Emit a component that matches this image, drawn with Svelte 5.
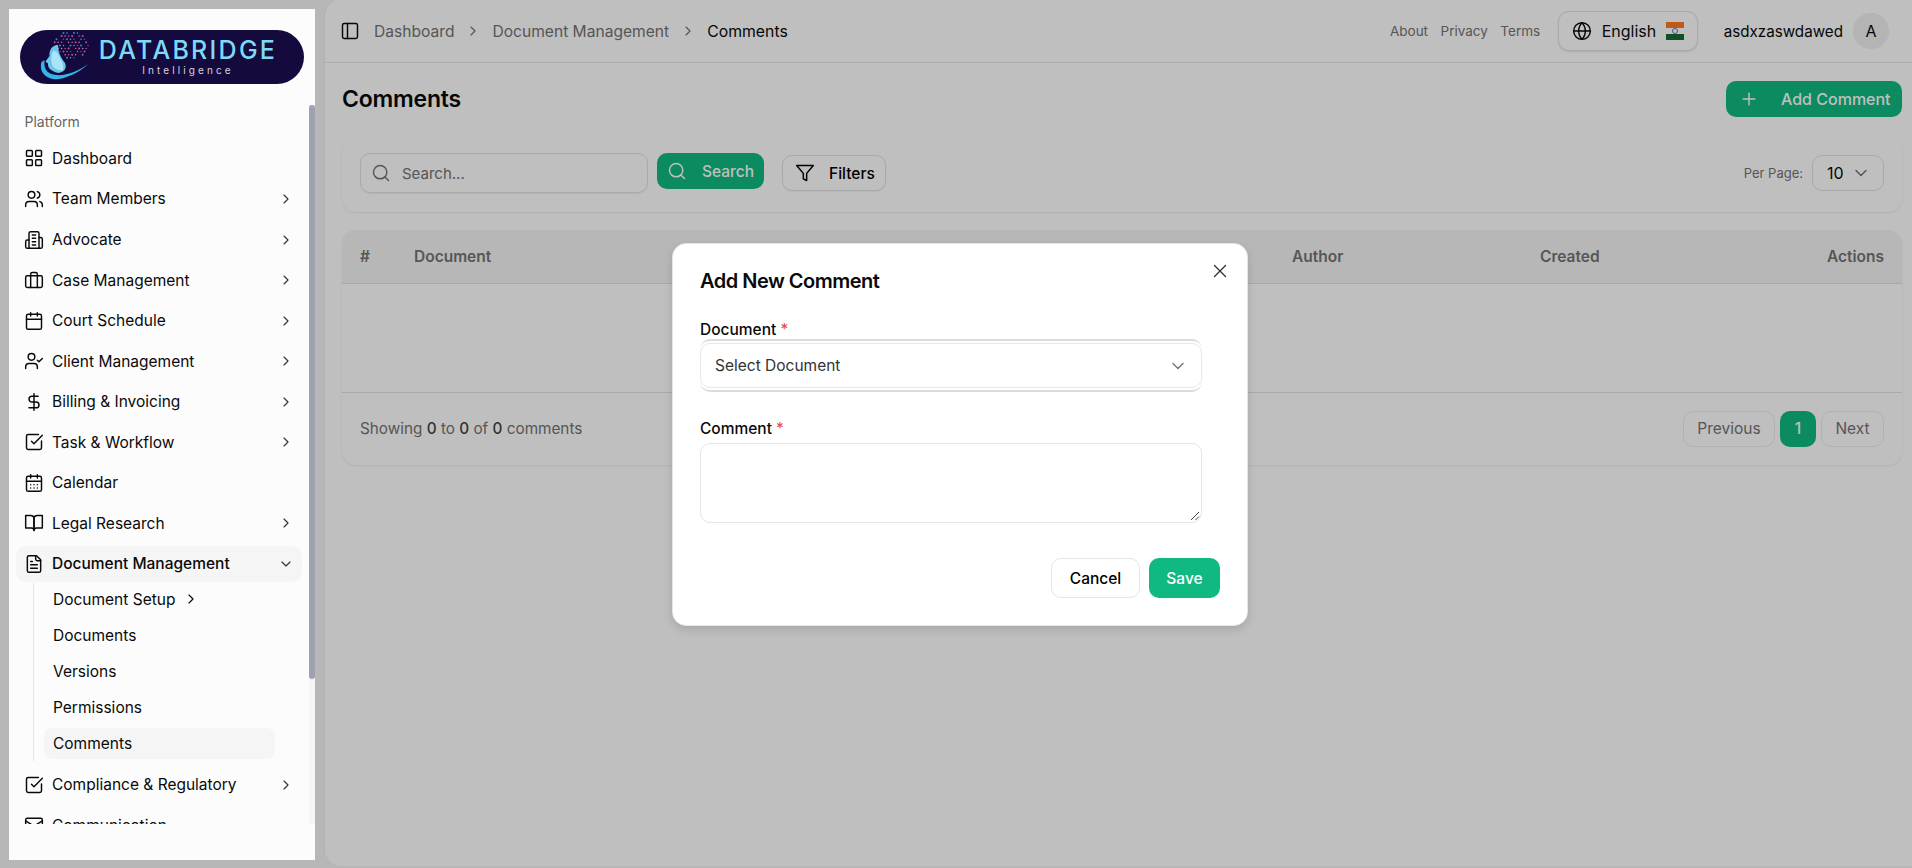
<script>
  const icons = {
    grid: '<rect x="3" y="3" width="7" height="7" rx="1"/><rect x="14" y="3" width="7" height="7" rx="1"/><rect x="14" y="14" width="7" height="7" rx="1"/><rect x="3" y="14" width="7" height="7" rx="1"/>',
    users: '<path d="M16 21v-2a4 4 0 0 0-4-4H6a4 4 0 0 0-4 4v2"/><circle cx="9" cy="7" r="4"/><path d="M22 21v-2a4 4 0 0 0-3-3.87"/><path d="M16 3.13a4 4 0 0 1 0 7.75"/>',
    building: '<path d="M6 22V4a2 2 0 0 1 2-2h8a2 2 0 0 1 2 2v18Z"/><path d="M6 12H4a2 2 0 0 0-2 2v6a2 2 0 0 0 2 2h2"/><path d="M18 9h2a2 2 0 0 1 2 2v9a2 2 0 0 1-2 2h-2"/><path d="M10 6h4"/><path d="M10 10h4"/><path d="M10 14h4"/><path d="M10 18h4"/>',
    briefcase: '<rect x="2" y="7" width="20" height="14" rx="2"/><path d="M16 21V5a2 2 0 0 0-2-2h-4a2 2 0 0 0-2 2v16"/>',
    calendar: '<path d="M8 2v4"/><path d="M16 2v4"/><rect x="3" y="4" width="18" height="18" rx="2"/><path d="M3 10h18"/>',
    usercheck: '<path d="M16 21v-2a4 4 0 0 0-4-4H6a4 4 0 0 0-4 4v2"/><circle cx="9" cy="7" r="4"/><path d="m16 11 2 2 4-4"/>',
    dollar: '<path d="M12 2v20"/><path d="M17 5H9.5a3.5 3.5 0 0 0 0 7h5a3.5 3.5 0 0 1 0 7H6"/>',
    check: '<path d="M21 10.656V19a2 2 0 0 1-2 2H5a2 2 0 0 1-2-2V5a2 2 0 0 1 2-2h12.344"/><path d="m9 11 3 3L22 4"/>',
    days: '<path d="M8 2v4"/><path d="M16 2v4"/><rect x="3" y="4" width="18" height="18" rx="2"/><path d="M3 10h18"/><path d="M8 14h.01"/><path d="M12 14h.01"/><path d="M16 14h.01"/><path d="M8 18h.01"/><path d="M12 18h.01"/><path d="M16 18h.01"/>',
    book: '<path d="M2 3h6a4 4 0 0 1 4 4v14a3 3 0 0 0-3-3H2z"/><path d="M22 3h-6a4 4 0 0 0-4 4v14a3 3 0 0 1 3-3h7z"/>',
    file: '<path d="M15 2H6a2 2 0 0 0-2 2v16a2 2 0 0 0 2 2h12a2 2 0 0 0 2-2V7Z"/><path d="M14 2v4a2 2 0 0 0 2 2h4"/><path d="M10 9H8"/><path d="M16 13H8"/><path d="M16 17H8"/>',
    mail: '<rect x="2" y="4" width="20" height="16" rx="2"/><path d="m22 7-8.97 5.7a1.94 1.94 0 0 1-2.06 0L2 7"/>',
    panel: '<rect x="3" y="3" width="18" height="18" rx="2"/><path d="M9 3v18"/>',
    globe: '<circle cx="12" cy="12" r="10"/><path d="M12 2a14.5 14.5 0 0 0 0 20 14.5 14.5 0 0 0 0-20"/><path d="M2 12h20"/>',
    search: '<circle cx="11" cy="11" r="8"/><path d="m21 21-4.3-4.3"/>',
    funnel: '<polygon points="22 3 2 3 10 12.46 10 19 14 21 14 12.46 22 3"/>',
    plus: '<path d="M5 12h14"/><path d="M12 5v14"/>',
    x: '<path d="M18 6 6 18"/><path d="m6 6 12 12"/>',
    down: '<path d="m6 9 6 6 6-6"/>',
    right: '<path d="m9 18 6-6-6-6"/>'
  };

  const before = [
    { icon: 'grid', label: 'Dashboard' },
    { icon: 'users', label: 'Team Members', more: true },
    { icon: 'building', label: 'Advocate', more: true },
    { icon: 'briefcase', label: 'Case Management', more: true },
    { icon: 'calendar', label: 'Court Schedule', more: true },
    { icon: 'usercheck', label: 'Client Management', more: true },
    { icon: 'dollar', label: 'Billing & Invoicing', more: true },
    { icon: 'check', label: 'Task & Workflow', more: true },
    { icon: 'days', label: 'Calendar' },
    { icon: 'book', label: 'Legal Research', more: true }
  ];
  const sub = ['Documents', 'Versions', 'Permissions'];

  // dot cloud of the logo
  const palette = ['#3f7fd6', '#e0598b', '#5a9be8', '#c94f8a', '#3568b8', '#f07aa0'];
  const dots = [];
  for (let r = 0; r < 9; r++) {
    for (let c = 0; c < 11; c++) {
      const x = 33 + c * 3.5 + (r % 2) * 1.6;
      const y = 3 + r * 3.100;
      const d = Math.hypot((x - 51) / 18, (y - 15) / 13.500);
      if (d < 1 && (r * 7 + c * 3) % 5 !== 0) {
        dots.push({ x, y, s: palette[(r * 5 + c * 2) % 6], r: (r + c) % 3 === 0 ? 1 : 0.75 });
      }
    }
  }
</script>

{#snippet ic(name, cls = '')}
  <svg class="ic {cls}" viewBox="0 0 24 24" fill="none" stroke="currentColor" stroke-width="2" stroke-linecap="round" stroke-linejoin="round">{@html icons[name]}</svg>
{/snippet}

{#snippet navItem(item)}
  <div class="item">
    {@render ic(item.icon, 'i20')}
    <span class="lbl">{item.label}</span>
    {#if item.more}{@render ic('right', 'i16 chev')}{/if}
  </div>
{/snippet}

<div class="app">
  <aside class="sidebar">
    <div class="logo">
      <svg class="logo-art" viewBox="0 0 70 54">
        {#each dots as d}<circle cx={d.x} cy={d.y} r={d.r} fill={d.s} />{/each}
        <path d="M38 15C32 15 29 20 29.500 26L25.500 31.500 28 33.500C27.500 38 31 41 38 43 45 42 47 38 45 33 41 28 38 22 38 15Z" fill="#6cc6ec" />
        <path d="M33 21C31 25 30.500 30 32.500 36 36 40 40 41 43 40 44 36 42 31 39 26 38 23 35.500 20 33 21Z" fill="#a9e4fa" />
        <path d="M21.500 32C18 44 30 52 42 48.500 53 45.500 62 40 68 34 59 41 46 46 36 45 28 44 23.500 40 24.500 30Z" fill="#35b4e8" />
      </svg>
      <div class="logo-text">
        <span class="brand">DATABRIDGE</span>
        <span class="tag">Intelligence</span>
      </div>
    </div>

    <div class="nav-wrap">
      <nav class="nav">
        <div class="group-label">Platform</div>
        <div class="items">
          {#each before as item}{@render navItem(item)}{/each}
          <div class="item active">
            {@render ic('file', 'i20')}
            <span class="lbl">Document Management</span>
            {@render ic('down', 'i16 chev')}
          </div>
          <div class="sublist">
            <div class="subitem">Document Setup {@render ic('right', 'i16 subchev')}</div>
            {#each sub as s}<div class="subitem">{s}</div>{/each}
            <div class="subitem current">Comments</div>
          </div>
          <div class="item">
            {@render ic('check', 'i20')}
            <span class="lbl">Compliance &amp; Regulatory</span>
            {@render ic('right', 'i16 chev')}
          </div>
          <div class="item">
            {@render ic('mail', 'i20')}
            <span class="lbl">Communication</span>
          </div>
        </div>
      </nav>
      <div class="scroll-track"><div class="scroll-thumb"></div></div>
    </div>
  </aside>

  <main class="main">
    <header class="topbar">
      {@render ic('panel', 'i20 toggle')}
      <span class="crumb">Dashboard</span>
      {@render ic('right', 'i16 sep')}
      <span class="crumb">Document Management</span>
      {@render ic('right', 'i16 sep')}
      <span class="crumb now">Comments</span>
      <div class="top-right">
        <span class="toplink">About</span>
        <span class="toplink">Privacy</span>
        <span class="toplink">Terms</span>
        <div class="lang">
          {@render ic('globe', 'i20')}
          <span>English</span>
          <span class="flag"><i class="wheel"></i></span>
        </div>
        <span class="uname">asdxzaswdawed</span>
        <span class="avatar">A</span>
      </div>
    </header>

    <div class="content">
      <div class="title-row">
        <h1>Comments</h1>
        <button class="btn-add">{@render ic('plus', 'i20')}<span>Add Comment</span></button>
      </div>

      <section class="card filters">
        <div class="search-input">{@render ic('search', 'i20')}<span>Search...</span></div>
        <button class="btn-search">{@render ic('search', 'i20')}<span>Search</span></button>
        <button class="btn-filter">{@render ic('funnel', 'i20')}<span>Filters</span></button>
        <div class="perpage">
          <span>Per Page:</span>
          <div class="pp-select"><b>10</b>{@render ic('down', 'i20')}</div>
        </div>
      </section>

      <section class="card table">
        <div class="thead">
          <span class="c-num">#</span>
          <span class="c-doc">Document</span>
          <span class="c-author">Author</span>
          <span class="c-created">Created</span>
          <span class="c-actions">Actions</span>
        </div>
        <div class="tbody"></div>
        <div class="tfoot">
          <span class="showing">Showing <b>0</b> to <b>0</b> of <b>0</b> comments</span>
          <div class="pager">
            <span class="pg prev">Previous</span>
            <span class="pg on">1</span>
            <span class="pg next">Next</span>
          </div>
        </div>
      </section>
    </div>
  </main>

  <div class="overlay">
    <div class="modal">
      <button class="close" aria-label="Close">{@render ic('x', 'i22')}</button>
      <h2>Add New Comment</h2>
      <div class="field first">
        <div class="label">Document <em>*</em></div>
        <div class="select-outer">
          <div class="select-inner"><span>Select Document</span>{@render ic('down', 'i20')}</div>
        </div>
      </div>
      <div class="field second">
        <div class="label">Comment <em>*</em></div>
        <div class="textarea">
          <svg class="grip" viewBox="0 0 10 10"><path d="M9 1 1 9M9 5.500 5.500 9" stroke="#444" stroke-width="1" fill="none" /></svg>
        </div>
      </div>
      <div class="actions">
        <button class="cancel">Cancel</button>
        <button class="save">Save</button>
      </div>
    </div>
  </div>
</div>

<style>
  :global(body) {
    margin: 0;
    font-family: Inter, "Noto Sans", sans-serif;
    color: #0a0a0a;
  }
  :global(*) { box-sizing: border-box; }

  .ic { flex: none; display: block; }
  .ic.i22 { width: 22px; height: 22px; stroke-width: 1.5; }
  .ic.i20 { width: 20px; height: 20px; stroke-width: 1.75; }
  .ic.i16 { width: 16px; height: 16px; stroke-width: 1.75; }

  .app {
    position: relative;
    display: flex;
    width: 1912px;
    height: 868px;
    overflow: hidden;
    background: #f5f5f5;
    font-size: 15.500px;
  }

  /* sidebar */
  .sidebar {
    position: relative;
    z-index: 60;
    flex: none;
    display: flex;
    flex-direction: column;
    width: 306px;
    height: 851px;
    margin: 9px 0 8px 9px;
    background: #fcfcfc;
    padding-bottom: 36px;
  }
  .logo {
    position: relative;
    flex: none;
    display: flex;
    align-items: center;
    width: 284px;
    height: 54px;
    margin: 21px 0 21px 11px;
    border-radius: 27px;
    background: #150a3e;
  }
  .logo-art { position: absolute; left: 0; top: 0; width: 70px; height: 54px; }
  .logo-text {
    display: flex;
    flex-direction: column;
    align-items: center;
    margin-left: 80px;
    width: 176px;
  }
  .brand {
    font-size: 25px;
    line-height: 24px;
    font-weight: 500;
    letter-spacing: 2.250px;
    color: #7ddaf7;
    white-space: nowrap;
  }
  .tag {
    font-size: 10px;
    line-height: 11px;
    letter-spacing: 3.100px;
    color: #d5d3de;
    margin-top: 3px;
  }
  .nav-wrap { position: relative; flex: 1; min-height: 0; overflow: hidden; }
  .nav { width: 300px; padding: 8px 0 0 7px; }
  .group-label {
    padding-left: 8.500px;
    font-size: 14px;
    line-height: 18px;
    color: #666;
  }
  .items { display: flex; flex-direction: column; gap: 4px; margin-top: 9.200px; }
  .item {
    display: flex;
    align-items: center;
    gap: 8px;
    width: 286px;
    height: 36.540px;
    padding: 0 8px;
    border-radius: 10px;
    white-space: nowrap;
  }
  .item.active { background: #f5f5f5; font-weight: 500; }
  .lbl { flex: 1; }
  .chev { color: #333; }
  .sublist {
    display: flex;
    flex-direction: column;
    gap: 5px;
    margin: -3.500px 0 2px 17px;
    padding: 1px 0 2px 10px;
    border-left: 1px solid #e5e5e5;
    width: 258px;
  }
  .subitem {
    display: flex;
    align-items: center;
    width: 231px;
    height: 31px;
    padding-left: 9px;
    border-radius: 8px;
  }
  .subitem.current { background: #f5f5f5; }
  .subchev { margin-left: 8px; }
  .scroll-track {
    position: absolute;
    right: 0;
    top: 0;
    bottom: 0;
    width: 6px;
    background: #f5f5f5;
  }
  .scroll-thumb {
    height: 574px;
    background: #9ca3af;
    border-radius: 3px;
  }

  /* main */
  .main {
    flex: 1;
    min-width: 0;
    display: flex;
    flex-direction: column;
    margin: 0 0 2px 9px;
    background: #fff;
    border-left: 1px solid #ededed;
    border-radius: 16px 0 0 16px;
  }
  .topbar {
    flex: none;
    display: flex;
    align-items: center;
    height: 63px;
    padding: 0 23px 0 15px;
    border-bottom: 1px solid #e8e8e8;
  }
  .toggle { margin-right: 14px; }
  .crumb { color: #737373; font-size: 15.600px; }
  .crumb.now { color: #0a0a0a; font-size: 15.800px; }
  .sep { margin: 0 11px; color: #737373; }
  .top-right { margin-left: auto; display: flex; align-items: center; }
  .toplink { font-size: 13.500px; color: #737373; margin-right: 12.500px; }
  .lang {
    display: flex;
    align-items: center;
    gap: 10px;
    width: 140px;
    height: 40px;
    margin-left: 5px;
    padding: 0 13px;
    border: 1px solid #e2e2e2;
    border-radius: 11px;
    background: #fff;
    box-shadow: 0 1px 2px rgba(0, 0, 0, 0.1);
    font-size: 16px;
  }
  .flag {
    position: relative;
    width: 18px;
    height: 18px;
    background: linear-gradient(#ff7722 0 33.300%, #ffffff 33.300% 66.600%, #146b35 66.600%);
  }
  .wheel {
    position: absolute;
    left: 6px;
    top: 6px;
    width: 6px;
    height: 6px;
    border-radius: 50%;
    border: 1.500px solid #6a6ac8;
  }
  .uname { margin-left: 26px; font-size: 15.200px; }
  .avatar {
    display: flex;
    align-items: center;
    justify-content: center;
    width: 36px;
    height: 36px;
    margin-left: 10px;
    border-radius: 50%;
    background: #f0f0f0;
    font-size: 16px;
  }

  .content {
    flex: 1;
    padding: 18px 10px 0 17px;
    display: flex;
    flex-direction: column;
    gap: 18px;
  }
  .title-row { display: flex; align-items: center; justify-content: space-between; height: 36px; }
  h1 { margin: -0.500px 0 0; font-size: 23px; font-weight: 600; letter-spacing: -0.2px; }
  button { font: inherit; cursor: pointer; }
  .btn-add {
    display: flex;
    align-items: center;
    gap: 22px;
    width: 176px;
    height: 36px;
    padding: 0 0 0 13px;
    border: 0;
    border-radius: 10px;
    background: #10b981;
    color: #fff;
    font-weight: 500;
    font-size: 16px;
    white-space: nowrap;
  }
  .card {
    background: #fff;
    border-radius: 14px;
    box-shadow: 0 1px 2px rgba(0, 0, 0, 0.08);
  }
  .filters {
    display: flex;
    align-items: flex-start;
    height: 77px;
    padding: 18px 18px 0 18px;
  }
  .search-input {
    display: flex;
    align-items: center;
    gap: 11px;
    width: 288px;
    height: 40px;
    padding-left: 10px;
    border: 1px solid #e2e2e2;
    border-radius: 10px;
    color: #737373;
    font-size: 15px;
    box-shadow: 0 1px 1px rgba(0, 0, 0, 0.05);
  }
  .btn-search {
    display: flex;
    align-items: center;
    gap: 15px;
    width: 107px;
    height: 36px;
    margin-left: 9px;
    padding: 0 0 0 10px;
    border: 0;
    border-radius: 10px;
    background: #10b981;
    color: #fff;
    font-weight: 500;
  }
  .btn-filter {
    display: flex;
    align-items: center;
    gap: 14px;
    width: 104px;
    height: 36px;
    margin: 2px 0 0 18px;
    padding: 0 0 0 12px;
    border: 1px solid #e2e2e2;
    border-radius: 10px;
    background: #fff;
    font-weight: 450;
    box-shadow: 0 1px 1px rgba(0, 0, 0, 0.05);
  }
  .perpage {
    margin: 2px 0 0 auto;
    display: flex;
    align-items: center;
    gap: 9px;
    font-size: 13px;
    color: #737373;
  }
  .pp-select {
    display: flex;
    align-items: center;
    gap: 7px;
    width: 72px;
    height: 36px;
    padding-left: 14px;
    border: 1px solid #e2e2e2;
    border-radius: 10px;
    color: #0a0a0a;
  }
  .pp-select b { font-weight: 400; font-size: 16px; }
  .pp-select .ic { color: #737373; }

  .table { height: 235px; overflow: hidden; display: flex; flex-direction: column; }
  .thead {
    flex: none;
    height: 54px;
    background: #f5f5f5;
    border-bottom: 1px solid #e2e2e2;
    font-weight: 600;
    color: #737373;
    display: grid;
    grid-template-columns: 54px 878px 248px 1fr auto;
    align-items: center;
    padding: 0 18px;
  }
  .tbody { flex: none; height: 109px; border-bottom: 1px solid #e2e2e2; }
  .tfoot {
    flex: 1;
    display: flex;
    align-items: center;
    justify-content: space-between;
    padding: 0 18px 1px;
    color: #737373;
  }
  .showing { font-size: 15.300px; }
  .showing b { font-weight: 500; color: #444; }
  .pager { display: flex; gap: 5px; }
  .pg {
    display: flex;
    align-items: center;
    justify-content: center;
    height: 36px;
    border: 1px solid #ececec;
    border-radius: 10px;
  }
  .pg.prev { width: 92px; }
  .pg.next { width: 63px; }
  .pg.on {
    width: 36px;
    border: 0;
    background: #10b981;
    color: #fff;
    font-weight: 500;
  }

  /* overlay and dialog */
  .overlay {
    position: absolute;
    inset: 0;
    z-index: 50;
    display: flex;
    align-items: center;
    justify-content: center;
    padding: 1px 0 0 8px;
    background: rgba(0, 0, 0, 0.25);
  }
  .modal {
    position: relative;
    width: 576px;
    height: 383px;
    padding: 24px 27px 28px 27px;
    background: #fff;
    border: 1px solid #e5e5e5;
    border-radius: 14px;
    box-shadow: 0 4px 10px rgba(0, 0, 0, 0.12);
  }
  .close {
    position: absolute;
    right: 16px;
    top: 16px;
    padding: 0;
    border: 0;
    background: none;
    color: #333;
  }
  h2 { margin: 0; font-size: 20px; line-height: 26px; font-weight: 600; letter-spacing: -0.5px; }
  .field { width: 502px; }
  .first { margin-top: 26px; }
  .second { margin-top: 27px; }
  .label { font-size: 15.500px; line-height: 20px; font-weight: 450; }
  .label em { color: #ef4444; font-style: normal; font-weight: 400; }
  .select-outer {
    height: 53px;
    padding: 4px 0;
    border: 1px solid #dcdcdc;
    border-width: 2px 0 2px 0;
    border-radius: 10px;
    margin-top: -1px;
  }
  .select-inner {
    display: flex;
    align-items: center;
    justify-content: space-between;
    height: 45px;
    margin-top: -2px;
    padding: 0 13px 0 14px;
    border: 1px solid #e8e8e8;
    border-radius: 10px;
    color: #333;
  }
  .select-inner .ic { color: #777; }
  .textarea {
    position: relative;
    height: 80px;
    margin-top: 4px;
    border: 1px solid #e5e5e5;
    border-radius: 10px;
  }
  .grip { position: absolute; right: 1px; bottom: 1px; width: 10px; height: 10px; }
  .actions {
    position: absolute;
    right: 27px;
    bottom: 27px;
    display: flex;
    gap: 9px;
  }
  .cancel {
    width: 89px;
    height: 40px;
    border: 1px solid #e5e5e5;
    border-radius: 10px;
    background: #fff;
    font-weight: 450;
  }
  .save {
    width: 71px;
    height: 40px;
    border: 0;
    border-radius: 10px;
    background: #10b981;
    color: #fff;
    font-weight: 500;
  }
</style>
